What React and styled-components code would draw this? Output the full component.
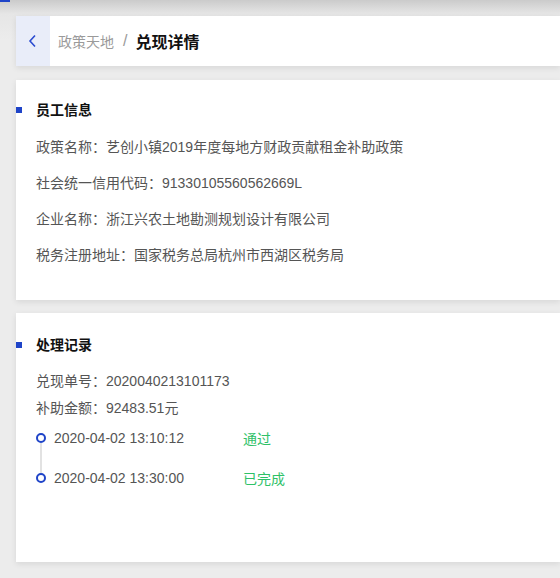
import React from 'react';
import styled, { createGlobalStyle } from 'styled-components';

const GlobalStyle = createGlobalStyle`
    html, body {
        margin: 0;
        padding: 0;
        overflow: hidden;
    }
    body {
        font-family: "Liberation Sans", "Noto Sans CJK SC", sans-serif;
        background: #ececec;
    }
`;

const Page = styled.div`
    position: relative;
    min-height: 100vh;
    box-sizing: border-box;
    padding: 16px 0 16px 16px;
    border-left: 2px solid #f6f6f6;
    margin-left: -2px;
    background: linear-gradient(#cbcbcb, #e6e6e6 14px, #ececec 40px);
    &::before {
        content: '';
        position: absolute;
        left: 0;
        top: 0;
        width: 10px;
        height: 2px;
        background: #1f44c8;
    }
`;

const Card = styled.div`
    position: relative;
    background: #fff;
    box-shadow: 0 2px 6px rgba(0, 0, 0, 0.09);
    margin-bottom: ${props => props.gap || 0}px;
    padding: ${props => props.pad || '0'};
    min-height: ${props => props.minH || 0}px;
    box-sizing: border-box;
`;

const Header = styled(Card)`
    display: flex;
    align-items: center;
    height: 50px;
`;

const BackButton = styled.div`
    width: 34px;
    height: 100%;
    background: #e9edf9;
    display: flex;
    align-items: center;
    justify-content: center;
    margin-right: 8px;
`;

const Crumb = styled.span`
    font-size: 14px;
    color: #9a9a9a;
`;

const Slash = styled.span`
    font-size: 16px;
    color: #9a9a9a;
    margin: 0 8px 0 9px;
`;

const Current = styled.span`
    font-size: 16px;
    font-weight: bold;
    color: #111;
`;

const Title = styled.h3`
    position: relative;
    margin: 0;
    font-size: 14px;
    line-height: 20px;
    font-weight: bold;
    color: #111;
    &::before {
        content: '';
        position: absolute;
        left: -20px;
        top: 7px;
        width: 6px;
        height: 6px;
        background: #1f44c8;
    }
`;

const InfoList = styled.div`
    margin-top: ${props => props.top}px;
`;

const InfoRow = styled.div`
    font-size: 14px;
    line-height: ${props => props.lh}px;
    color: #555;
    white-space: nowrap;
`;

const Timeline = styled.div`
    margin-top: 6px;
    display: flex;
    flex-direction: column;
    gap: 20px;
`;

const Step = styled.div`
    position: relative;
    display: flex;
    align-items: center;
    height: 20px;
    font-size: 14px;
    color: #555;
    &:not(:last-child)::after {
        content: '';
        position: absolute;
        left: 4px;
        top: 15px;
        width: 2px;
        height: 30px;
        background: #e2e2e2;
    }
`;

const Dot = styled.span`
    width: 10px;
    height: 10px;
    box-sizing: border-box;
    border: 2px solid #1f44c8;
    border-radius: 50%;
    margin-right: 8px;
    flex: none;
`;

const Time = styled.span`
    width: 189px;
    flex: none;
`;

const Status = styled.span`
    color: #2fc168;
`;

const info = [
    '政策名称：艺创小镇2019年度每地方财政贡献租金补助政策',
    '社会统一信用代码：91330105560562669L',
    '企业名称：浙江兴农土地勘测规划设计有限公司',
    '税务注册地址：国家税务总局杭州市西湖区税务局',
];

const steps = [
    { time: '2020-04-02 13:10:12', status: '通过' },
    { time: '2020-04-02 13:30:00', status: '已完成' },
];

export default function App() {
    return (
        <>
            <GlobalStyle />
            <Page>
                <Header gap={14}>
                    <BackButton>
                        <svg width='10' height='14' viewBox='0 0 10 14'>
                            <polyline points='7,1.5 2,7 7,12.5' fill='none' stroke='#2a4bd0' strokeWidth='1.6' />
                        </svg>
                    </BackButton>
                    <Crumb>政策天地</Crumb>
                    <Slash>/</Slash>
                    <Current>兑现详情</Current>
                </Header>

                <Card gap={13} pad='20px 20px 27px' minH={220}>
                    <Title>员工信息</Title>
                    <InfoList top={9}>
                        {info.map(line => (
                            <InfoRow key={line} lh={36}>{line}</InfoRow>
                        ))}
                    </InfoList>
                </Card>

                <Card pad='22px 20px 20px' minH={249}>
                    <Title>处理记录</Title>
                    <InfoList top={13}>
                        <InfoRow lh={27}>兑现单号：2020040213101173</InfoRow>
                        <InfoRow lh={27}>补助金额：92483.51元</InfoRow>
                    </InfoList>
                    <Timeline>
                        {steps.map(s => (
                            <Step key={s.time}>
                                <Dot />
                                <Time>{s.time}</Time>
                                <Status>{s.status}</Status>
                            </Step>
                        ))}
                    </Timeline>
                </Card>
            </Page>
        </>
    );
}
